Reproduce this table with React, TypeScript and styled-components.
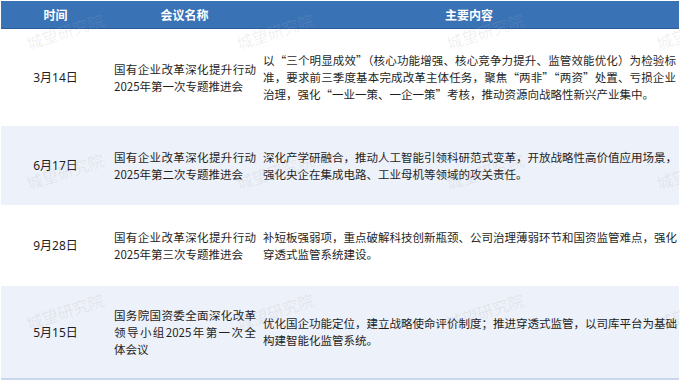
import React from "react";
import styled, { createGlobalStyle } from "styled-components";

type Meeting = {
  date: string;
  name: string[];
  content: string[];
  height: number;
  shaded?: boolean;
};

const meetings: Meeting[] = [
  {
    date: "3月14日",
    name: ["国有企业改革深化提升行动", "2025年第一次专题推进会"],
    content: [
      "以“三个明显成效”（核心功能增强、核心竞争力提升、监管效能优化）为检验标",
      "准，要求前三季度基本完成改革主体任务，聚焦“两非”“两资”处置、亏损企业",
      "治理，强化“一业一策、一企一策”考核，推动资源向战略性新兴产业集中。",
    ],
    height: 97,
  },
  {
    date: "6月17日",
    name: ["国有企业改革深化提升行动", "2025年第二次专题推进会"],
    content: [
      "深化产学研融合，推动人工智能引领科研范式变革，开放战略性高价值应用场景，",
      "强化央企在集成电路、工业母机等领域的攻关责任。",
    ],
    height: 79,
    shaded: true,
  },
  {
    date: "9月28日",
    name: ["国有企业改革深化提升行动", "2025年第三次专题推进会"],
    content: [
      "补短板强弱项，重点破解科技创新瓶颈、公司治理薄弱环节和国资监管难点，强化",
      "穿透式监管系统建设。",
    ],
    height: 81,
  },
  {
    date: "5月15日",
    name: ["国务院国资委全面深化改革", "领导小组2025年第一次全", "体会议"],
    content: [
      "优化国企功能定位，建立战略使命评价制度；推进穿透式监管，以司库平台为基础",
      "构建智能化监管系统。",
    ],
    height: 94,
    shaded: true,
  },
];

// watermark grid: 4 across, 3 down (centre points)
const marks: { x: number; y: number }[] = [];
[31, 171, 311].forEach((y) => {
  [65, 275, 485, 695].forEach((x) => marks.push({ x, y }));
});

const App = () => {
  return (
    <>
      <GlobalStyle />
      <Page>
        <Table>
          <HeadRow>
            <HeadCell>时间</HeadCell>
            <HeadCell>会议名称</HeadCell>
            <HeadCell>主要内容</HeadCell>
          </HeadRow>
          {meetings.map((m, i) => (
            <Row
              key={m.date}
              $shaded={m.shaded}
              $height={m.height}
              $last={i === meetings.length - 1}
            >
              <DateCell>{m.date}</DateCell>
              <TextCell>
                {m.name.map((l, j) => (
                  <Line key={j} $justify={j < m.name.length - 1}>
                    {l}
                  </Line>
                ))}
              </TextCell>
              <TextCell>
                {m.content.map((l, j) => (
                  <Line key={j} $justify={j < m.content.length - 1}>
                    {l}
                  </Line>
                ))}
              </TextCell>
            </Row>
          ))}
        </Table>
        {marks.map((p, i) => (
          <Watermark key={i} style={{ left: p.x - 42, top: p.y - 11 }}>
            城望研究院
          </Watermark>
        ))}
      </Page>
    </>
  );
};

export default App;

const GlobalStyle = createGlobalStyle`
  html, body {
    margin: 0;
    padding: 0;
    background: #ffffff;
  }
  body {
    font-family: "Noto Sans CJK SC", sans-serif;
    color: #1f1f1f;
  }
`;

const Page = styled.div`
  position: relative;
  width: 680px;
  height: 382px;
  overflow: hidden;
  padding: 1px 1px 0 1px;
  box-sizing: border-box;
`;

const Table = styled.div`
  display: flex;
  flex-direction: column;
`;

const HeadRow = styled.div`
  display: grid;
  grid-template-columns: 109px 149px 1fr;
  height: 27px;
  background: #3a72b6;
  border-bottom: 1px solid #2b5c9e;
`;

const HeadCell = styled.div`
  display: flex;
  align-items: center;
  justify-content: center;
  color: #ffffff;
  font-size: 12px;
  font-weight: 700;
  font-family: "Noto Sans CJK SC", sans-serif;
`;

const Row = styled.div<{ $shaded?: boolean; $height: number; $last?: boolean }>`
  display: grid;
  grid-template-columns: 109px 149px 1fr;
  align-items: center;
  height: ${(p) => p.$height}px;
  box-sizing: border-box;
  background: ${(p) => (p.$shaded ? "#edf1f9" : "#ffffff")};
  border-bottom: ${(p) => (p.$last ? "2px solid #c9d6ee" : "none")};
`;

const DateCell = styled.div`
  text-align: center;
  font-size: 12px;
  line-height: 17px;
  font-family: "Noto Sans", "Noto Sans CJK SC", sans-serif;
`;

const TextCell = styled.div`
  padding: 0 3px 0 4px;
  font-size: 11.5px;
  line-height: 17px;
  font-family: "Noto Sans CJK SC", sans-serif;
`;

const Line = styled.span<{ $justify?: boolean }>`
  display: block;
  white-space: nowrap;
  text-align: justify;
  text-align-last: ${(p) => (p.$justify ? "justify" : "left")};
`;

const Watermark = styled.div`
  position: absolute;
  width: 84px;
  height: 22px;
  line-height: 22px;
  text-align: center;
  pointer-events: none;
  font-family: "Noto Sans CJK SC", sans-serif;
  font-size: 16px;
  font-weight: 300;
  color: rgba(170, 170, 170, 0.24);
  white-space: nowrap;
  transform: rotate(-18deg);
  transform-origin: center;
`;
